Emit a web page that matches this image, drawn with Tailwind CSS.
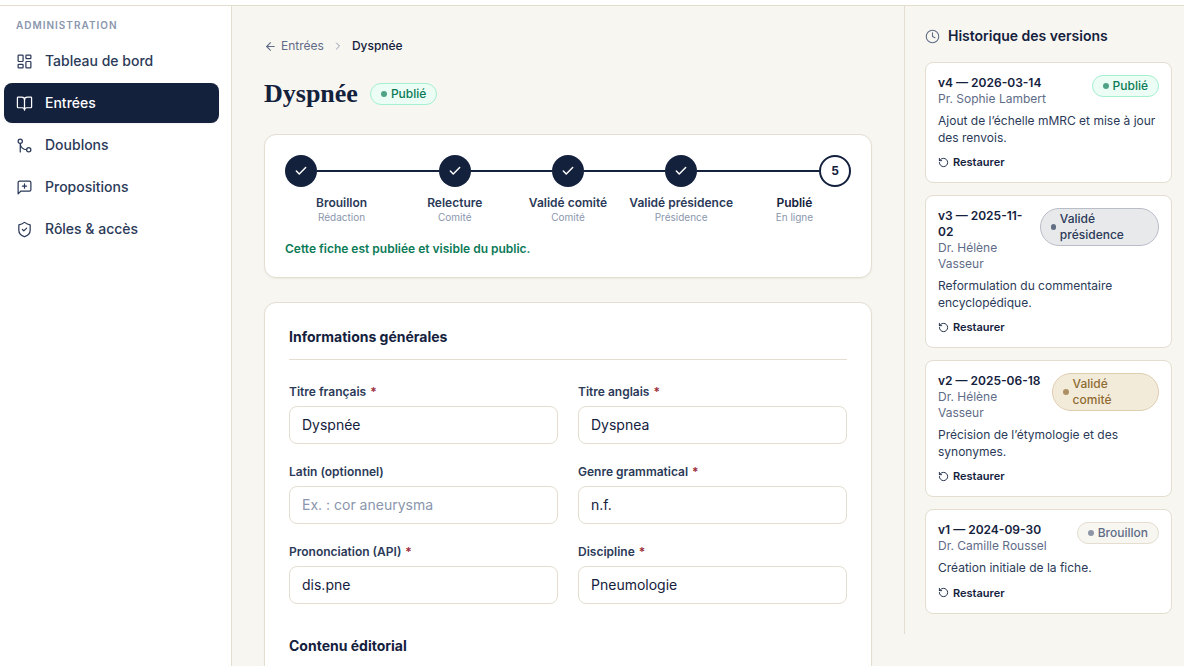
<!DOCTYPE html>
<html lang="fr">
<head>
    <meta charset="UTF-8">
    <meta name="viewport" content="width=device-width, initial-scale=1.0">
    <title>Dyspnée - Administration</title>
    <script src="https://cdn.jsdelivr.net/npm/@tailwindcss/browser@4"></script>
</head>
<body class="h-screen flex flex-col overflow-hidden bg-[#f8f6f1] text-[#14213d] font-['Inter',sans-serif]">
    <!-- Top bar -->
    <header class="h-1.5 shrink-0 bg-white border-b border-[#e4ddd0]"></header>

    <div class="flex flex-1 min-h-0">
        <!-- Sidebar -->
        <nav class="w-58 shrink-0 bg-white border-r border-[#e4ddd0] pt-3 pl-1 pr-3">
            <p class="px-3 mb-2 text-[10px] leading-[15px] font-semibold tracking-widest text-[#8a96ad]">ADMINISTRATION</p>
            <div class="flex flex-col gap-0.5 text-sm font-medium text-[#2b3a58]">
                <a href="#" class="flex items-center gap-3 h-10 px-3 rounded-lg hover:bg-[#f8f6f1]">
                    <svg class="size-[17px]" fill="none" stroke="currentColor" stroke-width="1.75" stroke-linecap="round" stroke-linejoin="round" viewBox="0 0 24 24">
                        <rect width="7" height="9" x="3" y="3" rx="1"/><rect width="7" height="5" x="14" y="3" rx="1"/><rect width="7" height="9" x="14" y="12" rx="1"/><rect width="7" height="5" x="3" y="16" rx="1"/>
                    </svg>
                    Tableau de bord
                </a>
                <a href="#" class="flex items-center gap-3 h-10 px-3 rounded-lg bg-[#14213d] text-white shadow-xs">
                    <svg class="size-[17px]" fill="none" stroke="currentColor" stroke-width="1.75" stroke-linecap="round" stroke-linejoin="round" viewBox="0 0 24 24">
                        <path d="M12 7v14"/><path d="M3 18a1 1 0 0 1-1-1V4a1 1 0 0 1 1-1h5a4 4 0 0 1 4 4 4 4 0 0 1 4-4h5a1 1 0 0 1 1 1v13a1 1 0 0 1-1 1h-6a3 3 0 0 0-3 3 3 3 0 0 0-3-3z"/>
                    </svg>
                    Entrées
                </a>
                <a href="#" class="flex items-center gap-3 h-10 px-3 rounded-lg hover:bg-[#f8f6f1]">
                    <svg class="size-[17px]" fill="none" stroke="currentColor" stroke-width="1.75" stroke-linecap="round" stroke-linejoin="round" viewBox="0 0 24 24">
                        <circle cx="18" cy="18" r="3"/><circle cx="6" cy="6" r="3"/><path d="M6 21V9a9 9 0 0 0 9 9"/>
                    </svg>
                    Doublons
                </a>
                <a href="#" class="flex items-center gap-3 h-10 px-3 rounded-lg hover:bg-[#f8f6f1]">
                    <svg class="size-[17px]" fill="none" stroke="currentColor" stroke-width="1.75" stroke-linecap="round" stroke-linejoin="round" viewBox="0 0 24 24">
                        <path d="M21 15a2 2 0 0 1-2 2H7l-4 4V5a2 2 0 0 1 2-2h14a2 2 0 0 1 2 2z"/><path d="M12 7v6"/><path d="M9 10h6"/>
                    </svg>
                    Propositions
                </a>
                <a href="#" class="flex items-center gap-3 h-10 px-3 rounded-lg hover:bg-[#f8f6f1]">
                    <svg class="size-[17px]" fill="none" stroke="currentColor" stroke-width="1.75" stroke-linecap="round" stroke-linejoin="round" viewBox="0 0 24 24">
                        <path d="M20 13c0 5-3.500 7.500-7.660 8.950a1 1 0 0 1-.670-.010C7.500 20.500 4 18 4 13V6a1 1 0 0 1 1-1c2 0 4.500-1.200 6.240-2.720a1.170 1.170 0 0 1 1.520 0C14.510 3.810 17 5 19 5a1 1 0 0 1 1 1z"/><path d="m9 12 2 2 4-4"/>
                    </svg>
                    Rôles &amp; accès
                </a>
            </div>
        </nav>

        <!-- Main Content -->
        <main class="flex-1 min-w-0 p-8">
            <div class="flex items-center gap-2 text-xs">
                <a href="#" class="flex items-center gap-1 text-[#5f6c87] hover:underline">
                    <svg class="size-[13px]" fill="none" stroke="currentColor" stroke-width="2" stroke-linecap="round" stroke-linejoin="round" viewBox="0 0 24 24">
                        <path d="m12 19-7-7 7-7"/><path d="M19 12H5"/>
                    </svg>
                    Entrées
                </a>
                <svg class="size-3 text-[#8a96ad]" fill="none" stroke="currentColor" stroke-width="2" stroke-linecap="round" stroke-linejoin="round" viewBox="0 0 24 24">
                    <path d="m9 18 6-6-6-6"/>
                </svg>
                <span class="font-medium">Dyspnée</span>
            </div>

            <div class="flex items-center gap-3 mt-6 mb-6">
                <h1 class="text-[26px] leading-8 font-bold font-['Liberation_Serif',serif]">Dyspnée</h1>
                <span class="inline-flex items-center gap-1 px-2.5 py-0.5 rounded-full border border-[#a4f0cf] bg-[#ecfdf5] text-xs font-medium text-[#0b7a57]">
                    <span class="size-1.5 rounded-full bg-current opacity-70"></span>Publié
                </span>
            </div>

            <!-- Workflow steps -->
            <section class="bg-white border border-[#e4ddd0] rounded-xl shadow-xs p-5">
                <ol class="grid grid-cols-5 text-center text-xs">
                    <li>
                        <div class="flex items-center">
                            <span class="size-8 rounded-full bg-[#14213d] text-white flex items-center justify-center">
                                <svg class="size-3.5" fill="none" stroke="currentColor" stroke-width="2.5" stroke-linecap="round" stroke-linejoin="round" viewBox="0 0 24 24"><path d="M20 6 9 17l-5-5"/></svg>
                            </span>
                            <span class="flex-1 h-0.5 bg-[#14213d]"></span>
                        </div>
                        <p class="mt-2 font-semibold text-[#2b3a58] whitespace-nowrap">Brouillon</p>
                        <p class="text-[10px] leading-3 text-[#8a96ad]">Rédaction</p>
                    </li>
                    <li>
                        <div class="flex items-center">
                            <span class="flex-1 h-0.5 bg-[#14213d]"></span>
                            <span class="size-8 rounded-full bg-[#14213d] text-white flex items-center justify-center">
                                <svg class="size-3.5" fill="none" stroke="currentColor" stroke-width="2.5" stroke-linecap="round" stroke-linejoin="round" viewBox="0 0 24 24"><path d="M20 6 9 17l-5-5"/></svg>
                            </span>
                            <span class="flex-1 h-0.5 bg-[#14213d]"></span>
                        </div>
                        <p class="mt-2 font-semibold text-[#2b3a58] whitespace-nowrap">Relecture</p>
                        <p class="text-[10px] leading-3 text-[#8a96ad]">Comité</p>
                    </li>
                    <li>
                        <div class="flex items-center">
                            <span class="flex-1 h-0.5 bg-[#14213d]"></span>
                            <span class="size-8 rounded-full bg-[#14213d] text-white flex items-center justify-center">
                                <svg class="size-3.5" fill="none" stroke="currentColor" stroke-width="2.5" stroke-linecap="round" stroke-linejoin="round" viewBox="0 0 24 24"><path d="M20 6 9 17l-5-5"/></svg>
                            </span>
                            <span class="flex-1 h-0.5 bg-[#14213d]"></span>
                        </div>
                        <p class="mt-2 font-semibold text-[#2b3a58] whitespace-nowrap">Validé comité</p>
                        <p class="text-[10px] leading-3 text-[#8a96ad]">Comité</p>
                    </li>
                    <li>
                        <div class="flex items-center">
                            <span class="flex-1 h-0.5 bg-[#14213d]"></span>
                            <span class="size-8 rounded-full bg-[#14213d] text-white flex items-center justify-center">
                                <svg class="size-3.5" fill="none" stroke="currentColor" stroke-width="2.5" stroke-linecap="round" stroke-linejoin="round" viewBox="0 0 24 24"><path d="M20 6 9 17l-5-5"/></svg>
                            </span>
                            <span class="flex-1 h-0.5 bg-[#14213d]"></span>
                        </div>
                        <p class="mt-2 font-semibold text-[#2b3a58] whitespace-nowrap">Validé présidence</p>
                        <p class="text-[10px] leading-3 text-[#8a96ad]">Présidence</p>
                    </li>
                    <li>
                        <div class="flex items-center">
                            <span class="flex-1 h-0.5 bg-[#14213d]"></span>
                            <span class="size-8 rounded-full border-2 border-[#14213d] bg-white font-bold flex items-center justify-center">5</span>
                        </div>
                        <p class="mt-2 font-semibold whitespace-nowrap">Publié</p>
                        <p class="text-[10px] leading-3 text-[#8a96ad]">En ligne</p>
                    </li>
                </ol>
                <p class="mt-4.5 text-xs font-semibold text-[#0b7a57]">Cette fiche est publiée et visible du public.</p>
            </section>

            <!-- Entry form -->
            <form class="mt-6 bg-white border border-[#e4ddd0] rounded-xl shadow-xs p-6">
                <h2 class="text-sm font-bold pb-3 mb-6 border-b border-[#e4ddd0]">Informations générales</h2>
                <div class="grid grid-cols-2 gap-5">
                    <div class="flex flex-col gap-1.5">
                        <label for="titre-fr" class="flex gap-1 text-xs font-semibold text-[#2b3a58]">Titre français <span class="text-[#9b2c3a]">*</span></label>
                        <input id="titre-fr" type="text" value="Dyspnée" class="w-full px-3 pt-2 pb-[9px] text-sm leading-[19px] bg-white border border-[#e4ddd0] rounded-lg">
                    </div>
                    <div class="flex flex-col gap-1.5">
                        <label for="titre-en" class="flex gap-1 text-xs font-semibold text-[#2b3a58]">Titre anglais <span class="text-[#9b2c3a]">*</span></label>
                        <input id="titre-en" type="text" value="Dyspnea" class="w-full px-3 pt-2 pb-[9px] text-sm leading-[19px] bg-white border border-[#e4ddd0] rounded-lg">
                    </div>
                    <div class="flex flex-col gap-1.5">
                        <label for="latin" class="flex gap-1 text-xs font-semibold text-[#2b3a58]">Latin (optionnel)</label>
                        <input id="latin" type="text" placeholder="Ex. : cor aneurysma" class="w-full px-3 pt-2 pb-[9px] text-sm leading-[19px] bg-white border border-[#e4ddd0] rounded-lg placeholder:text-[#8a96ad]">
                    </div>
                    <div class="flex flex-col gap-1.5">
                        <label for="genre" class="flex gap-1 text-xs font-semibold text-[#2b3a58]">Genre grammatical <span class="text-[#9b2c3a]">*</span></label>
                        <input id="genre" type="text" value="n.f." class="w-full px-3 pt-2 pb-[9px] text-sm leading-[19px] bg-white border border-[#e4ddd0] rounded-lg">
                    </div>
                    <div class="flex flex-col gap-1.5">
                        <label for="api" class="flex gap-1 text-xs font-semibold text-[#2b3a58]">Prononciation (API) <span class="text-[#9b2c3a]">*</span></label>
                        <input id="api" type="text" value="dis.pne" class="w-full px-3 pt-2 pb-[9px] text-sm leading-[19px] bg-white border border-[#e4ddd0] rounded-lg">
                    </div>
                    <div class="flex flex-col gap-1.5">
                        <label for="discipline" class="flex gap-1 text-xs font-semibold text-[#2b3a58]">Discipline <span class="text-[#9b2c3a]">*</span></label>
                        <input id="discipline" type="text" value="Pneumologie" class="w-full px-3 pt-2 pb-[9px] text-sm leading-[19px] bg-white border border-[#e4ddd0] rounded-lg">
                    </div>
                </div>
                <h2 class="mt-8 text-sm font-bold pb-3 border-b border-[#e4ddd0]">Contenu éditorial</h2>
            </form>
        </main>

        <!-- Version history -->
        <aside class="w-70 shrink-0 self-start border-l border-[#e4ddd0] py-5 pl-5 pr-3">
            <h2 class="flex items-center gap-2 mb-4 text-sm font-semibold">
                <svg class="size-[15px] text-[#5f6c87]" fill="none" stroke="currentColor" stroke-width="1.75" stroke-linecap="round" stroke-linejoin="round" viewBox="0 0 24 24">
                    <circle cx="12" cy="12" r="10"/><path d="M12 6v6l4 2"/>
                </svg>
                Historique des versions
            </h2>
            <ul class="flex flex-col gap-3 text-xs">
                <li class="bg-white border border-[#e4ddd0] rounded-lg p-3">
                    <div class="flex items-start justify-between gap-2">
                        <div>
                            <p class="font-semibold">v4 — 2026-03-14</p>
                            <p class="text-[#5f6c87]">Pr. Sophie Lambert</p>
                        </div>
                        <span class="inline-flex items-center gap-1 px-2.5 py-0.5 rounded-full border border-[#a4f0cf] bg-[#ecfdf5] font-medium text-[#0b7a57]">
                            <span class="size-1.5 rounded-full bg-current opacity-70"></span>Publié
                        </span>
                    </div>
                    <p class="mt-1.5 leading-snug text-[#2b3a58]">Ajout de l’échelle mMRC et mise à jour des renvois.</p>
                    <button type="button" class="mt-2 flex items-center gap-1 text-[11px] leading-4 font-semibold cursor-pointer hover:underline">
                        <svg class="size-[11px]" fill="none" stroke="currentColor" stroke-width="2" stroke-linecap="round" stroke-linejoin="round" viewBox="0 0 24 24"><path d="M3 12a9 9 0 1 0 9-9 9.750 9.750 0 0 0-6.740 2.740L3 8"/><path d="M3 3v5h5"/></svg>
                        Restaurer
                    </button>
                </li>
                <li class="bg-white border border-[#e4ddd0] rounded-lg p-3">
                    <div class="flex items-start justify-between gap-2">
                        <div>
                            <p class="font-semibold">v3 — 2025-11-02</p>
                            <p class="text-[#5f6c87]">Dr. Hélène Vasseur</p>
                        </div>
                        <span class="inline-flex items-center gap-1 px-2.5 py-0.5 rounded-full border border-[#b9bdc8] bg-[#e8e9eb] font-medium text-[#2b3a58]">
                            <span class="size-1.5 rounded-full bg-current opacity-70"></span>Validé présidence
                        </span>
                    </div>
                    <p class="mt-1.5 leading-snug text-[#2b3a58]">Reformulation du commentaire encyclopédique.</p>
                    <button type="button" class="mt-2 flex items-center gap-1 text-[11px] leading-4 font-semibold cursor-pointer hover:underline">
                        <svg class="size-[11px]" fill="none" stroke="currentColor" stroke-width="2" stroke-linecap="round" stroke-linejoin="round" viewBox="0 0 24 24"><path d="M3 12a9 9 0 1 0 9-9 9.750 9.750 0 0 0-6.740 2.740L3 8"/><path d="M3 3v5h5"/></svg>
                        Restaurer
                    </button>
                </li>
                <li class="bg-white border border-[#e4ddd0] rounded-lg p-3">
                    <div class="flex items-start justify-between gap-2">
                        <div>
                            <p class="font-semibold">v2 — 2025-06-18</p>
                            <p class="text-[#5f6c87]">Dr. Hélène Vasseur</p>
                        </div>
                        <span class="inline-flex items-center gap-1 px-2.5 py-0.5 rounded-full border border-[#e0cdb0] bg-[#f3ebda] font-medium text-[#8f6b32]">
                            <span class="size-1.5 rounded-full bg-current opacity-70"></span>Validé comité
                        </span>
                    </div>
                    <p class="mt-1.5 leading-snug text-[#2b3a58]">Précision de l’étymologie et des synonymes.</p>
                    <button type="button" class="mt-2 flex items-center gap-1 text-[11px] leading-4 font-semibold cursor-pointer hover:underline">
                        <svg class="size-[11px]" fill="none" stroke="currentColor" stroke-width="2" stroke-linecap="round" stroke-linejoin="round" viewBox="0 0 24 24"><path d="M3 12a9 9 0 1 0 9-9 9.750 9.750 0 0 0-6.740 2.740L3 8"/><path d="M3 3v5h5"/></svg>
                        Restaurer
                    </button>
                </li>
                <li class="bg-white border border-[#e4ddd0] rounded-lg p-3">
                    <div class="flex items-start justify-between gap-2">
                        <div>
                            <p class="font-semibold">v1 — 2024-09-30</p>
                            <p class="text-[#5f6c87]">Dr. Camille Roussel</p>
                        </div>
                        <span class="inline-flex items-center gap-1 px-2.5 py-0.5 rounded-full border border-[#e4ddd0] bg-[#f8f6f1] font-medium text-[#5f6c87]">
                            <span class="size-1.5 rounded-full bg-current opacity-70"></span>Brouillon
                        </span>
                    </div>
                    <p class="mt-1.5 leading-snug text-[#2b3a58]">Création initiale de la fiche.</p>
                    <button type="button" class="mt-2 flex items-center gap-1 text-[11px] leading-4 font-semibold cursor-pointer hover:underline">
                        <svg class="size-[11px]" fill="none" stroke="currentColor" stroke-width="2" stroke-linecap="round" stroke-linejoin="round" viewBox="0 0 24 24"><path d="M3 12a9 9 0 1 0 9-9 9.750 9.750 0 0 0-6.740 2.740L3 8"/><path d="M3 3v5h5"/></svg>
                        Restaurer
                    </button>
                </li>
            </ul>
        </aside>
    </div>
</body>
</html>
